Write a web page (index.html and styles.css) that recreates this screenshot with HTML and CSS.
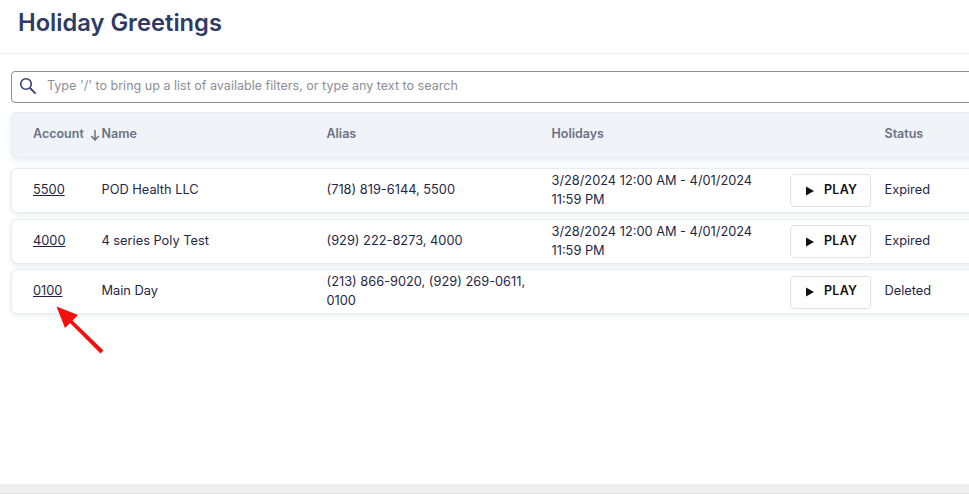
FILE: index.html
```html
<!DOCTYPE html>
<html lang="en">
<head>
<meta charset="utf-8">
<title>Holiday Greetings</title>
<link rel="stylesheet" href="styles.css">
</head>
<body>
<div class="page">
  <header class="top"><h1>Holiday Greetings</h1></header>
  <main class="content">
    <div class="search">
      <svg class="search-icon" viewBox="0 0 18 18" width="18" height="18"><circle cx="7" cy="7" r="5.3" fill="none" stroke="#33416a" stroke-width="1.6"/><path d="M11 11l5.6 5.6" stroke="#33416a" stroke-width="1.8" fill="none"/></svg>
      <span class="placeholder">Type '/' to bring up a list of available filters, or type any text to search</span>
    </div>
    <div class="row head">
      <div class="cell">Account <svg class="sort" viewBox="0 0 10 12" width="10" height="12"><path d="M5 1v10M1.2 7l3.8 4 3.8-4" fill="none" stroke="#6b7488" stroke-width="1.5"/></svg></div>
      <div class="cell">Name</div>
      <div class="cell">Alias</div>
      <div class="cell">Holidays</div>
      <div class="cell"></div>
      <div class="cell">Status</div>
    </div>
    <div class="row item first">
      <div class="cell"><a href="#">5500</a></div>
      <div class="cell">POD Health LLC</div>
      <div class="cell">(718) 819-6144, 5500</div>
      <div class="cell">3/28/2024 12:00 AM - 4/01/2024 11:59 PM</div>
      <div class="cell"><button class="play"><svg viewBox="0 0 8 10" width="8" height="10"><path d="M0 0.500v9l8-4.500z" fill="#111"/></svg>PLAY</button></div>
      <div class="cell">Expired</div>
    </div>
    <div class="row item second">
      <div class="cell"><a href="#">4000</a></div>
      <div class="cell">4 series Poly Test</div>
      <div class="cell">(929) 222-8273, 4000</div>
      <div class="cell">3/28/2024 12:00 AM - 4/01/2024 11:59 PM</div>
      <div class="cell"><button class="play"><svg viewBox="0 0 8 10" width="8" height="10"><path d="M0 0.500v9l8-4.500z" fill="#111"/></svg>PLAY</button></div>
      <div class="cell">Expired</div>
    </div>
    <div class="row item third">
      <div class="cell"><a href="#">0100</a></div>
      <div class="cell">Main Day</div>
      <div class="cell">(213) 866-9020, (929) 269-0611, 0100</div>
      <div class="cell"></div>
      <div class="cell"><button class="play"><svg viewBox="0 0 8 10" width="8" height="10"><path d="M0 0.500v9l8-4.500z" fill="#111"/></svg>PLAY</button></div>
      <div class="cell">Deleted</div>
    </div>
  </main>
  <svg class="arrow" viewBox="0 0 60 60" width="60" height="60"><path d="M0.500 0.500L22 9 16.500 14.500 47.500 44.500 44.500 47.500 14 17 9 22z" fill="#f60d0d"/></svg>
  <div class="scrollbar"></div>
</div>
</body>
</html>
```
FILE: styles.css
```css
* { box-sizing: border-box; }
html, body { margin: 0; padding: 0; height: 100%; overflow: hidden; background: #fff; }
body { font-family: Inter, "Liberation Sans", sans-serif; font-size: 12.8px; color: #1f2747; }
.page { position: relative; width: 969px; height: 494px; overflow: hidden; }
.top { height: 54px; border-bottom: 1px solid #eceef4; padding: 9px 0 0 18px; }
h1 { margin: 0; font-size: 23.7px; line-height: 28px; font-weight: 600; color: #2f3b64; }
.content { width: 1120px; padding: 17px 0 0 11px; }
.search { display: flex; align-items: center; height: 32px; border: 1px solid #8e8e8e; border-radius: 4px; padding: 0 0 3px 7px; margin-bottom: 9px; }
.search-icon { flex: none; margin-right: 10px; }
.placeholder { color: #8b8e96; font-size: 12.55px; }
.row { display: grid; grid-template-columns: 68.5px 225px 225px 238.5px 94.5px 1fr; align-items: center; padding: 0 0 2px 21px; border: 1px solid #e6eaf1; border-radius: 6px; }
.head { height: 46px; padding-bottom: 3px; background: #f0f4f8; font-weight: 600; font-size: 12.5px; color: #6a7285; margin-bottom: 10px; box-shadow: 0 3px 6px rgba(120, 135, 170, .14); }
.sort { vertical-align: -3px; margin-left: 3px; }
.item { height: 45px; background: #fff; line-height: 19px; box-shadow: 0 2px 5px rgba(120, 135, 170, .16); }
.second { margin: 6px 0 5px; }
.cell { padding-right: 8px; }
.head .cell:first-child { white-space: nowrap; padding-right: 0; }
a { color: #1f2747; }
.play { display: flex; align-items: center; width: 81px; height: 33px; margin-top: 2px; padding: 0 0 3px 15px; background: #fff; border: 1px solid #dfe1e6; border-radius: 4px; font: 600 12.5px Inter, "Liberation Sans", sans-serif; letter-spacing: .25px; color: #111; }
.third .play { margin-top: 4px; padding-bottom: 5px; }
.play svg { margin: 3px 10px 0 0; }
.arrow { position: absolute; left: 56px; top: 306px; }
.scrollbar { position: absolute; left: 0; right: 0; bottom: 0; height: 10px; background: #eeeeee; border-bottom: 1px solid #e2e2e2; }
```
